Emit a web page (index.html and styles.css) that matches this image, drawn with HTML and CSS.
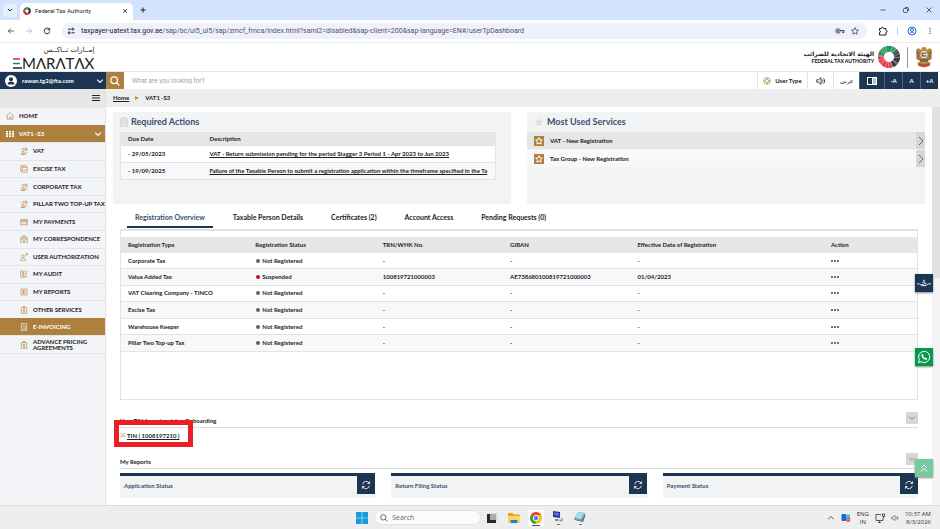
FILE: index.html
```html
<!DOCTYPE html>
<html lang="en">
<head>
<meta charset="utf-8">
<title>Federal Tax Authority</title>
<link rel="stylesheet" href="styles.css">
</head>
<body>
<svg class="defs" aria-hidden="true">
  <symbol id="down" viewBox="0 0 10 10"><path d="M1.500 3.200 5 6.700 8.500 3.200"/></symbol>
  <symbol id="right" viewBox="0 0 10 10"><path d="M3 1 7 5 3 9"/></symbol>
  <symbol id="refresh" viewBox="0 0 12 12"><path d="M2 5a4.200 4.200 0 0 1 7.800-1.200M10 7a4.200 4.200 0 0 1-7.800 1.200M10.300 1.500v2.800H7.600M1.700 10.500V7.700h2.700"/></symbol>
  <symbol id="coins" viewBox="0 0 12 12"><path d="M3 11V6.500h3V11zM4.500 5V2.500h2M6.500 9.500h2c2 0 2.500-1 2.500-2M9 5.500a2 2 0 1 0 0-4 2 2 0 0 0 0 4zM9 2.500v2M1 11h7M1.500 4l1.500-1.500"/></symbol>
  <symbol id="copy" viewBox="0 0 12 12"><path d="M3 9H1V1h8v2M3.500 3.500H11V11H3.500zM5.500 7.500l1.500 1.500 2.500-3M3 3h3"/></symbol>
  <symbol id="card" viewBox="0 0 12 12"><path d="M1 2.500h10v7.500H1zM1 5h10M3 7.500h2M7 7.500l1 1 2-2.500M1 3.500h10"/></symbol>
  <symbol id="mail" viewBox="0 0 12 12"><path d="M1 4.500h10V11H1zM3 4.500v-2h6v2M1 5l5 3 5-3M4 9.500h4M5 1h2"/></symbol>
  <symbol id="user" viewBox="0 0 12 12"><path d="M4.500 7a2 2 0 1 0 0-4 2 2 0 0 0 0 4zM1 11.500C1 9 2.500 7.500 4.500 7.500S8 9 8 11.500zM7.500 4.500 11 1M8.500 1H11v2.500"/></symbol>
  <symbol id="audit" viewBox="0 0 12 12"><path d="M8 1.500H1V11h8V6M3 4h3M3 6h2M3 8.500h4M6.500 4.500 8 6l3.500-5M5 3v6"/></symbol>
  <symbol id="report" viewBox="0 0 12 12"><path d="M1.500 1.500h9v9h-9zM3.500 4h5M3.500 6h5M3.500 8h5M5 3v6"/></symbol>
  <symbol id="clip" viewBox="0 0 12 12"><path d="M2 2.500h8V11.500H2zM4 2.500V1h4v1.500M6 4v6M7.500 5.500c-1-1-3-.5-3 .5s3 1 3 2-2 1.500-3 .5"/></symbol>
  <symbol id="invoice" viewBox="0 0 12 12"><path d="M2 1h8v10.500H2zM4 3.500h1.500M4 6h2l2-2.500M8 6v3H4"/></symbol>
  <symbol id="star" viewBox="0 0 12 12"><path d="M6 1l1.500 3.300 3.600.4-2.700 2.400.8 3.600L6 8.900l-3.200 1.800.8-3.600L.9 4.700l3.600-.4z"/></symbol>
  <symbol id="sound" viewBox="0 0 12 12"><path d="M1 4.500h2L6 2v8L3 7.500H1zM7.500 4.200c1 1 1 2.600 0 3.600M9 2.800c1.800 1.800 1.800 4.600 0 6.400"/></symbol>
  <symbol id="mag" viewBox="0 0 12 12"><path d="M5 9a4 4 0 1 0 0-8 4 4 0 0 0 0 8zM8 8l3.200 3.200"/></symbol>
</svg>

<header class="browser">
  <div class="tabs">
    <button class="tab-list" aria-label="Search tabs"><svg class="i6 bold"><use href="#down"/></svg></button>
    <div class="tab">
      <svg class="fav" viewBox="0 0 10 10"><g fill="none" stroke-width="2.800"><path stroke="#189b58" d="M1.700 4A3.500 3.500 0 0 1 6.500 1.800"/><path stroke="#303234" d="M6.500 1.800A3.500 3.500 0 0 1 7 7.900"/><path stroke="#e32940" d="M7 7.900A3.500 3.500 0 0 1 1.700 4"/></g></svg>
      <span>Federal Tax Authority</span>
      <button class="close" aria-label="Close tab"><svg viewBox="0 0 8 8" class="i6"><path d="M1.500 1.500l5 5M6.500 1.500l-5 5"/></svg></button>
    </div>
    <button aria-label="New tab"><svg viewBox="0 0 8 8" class="i8"><path d="M4 1.500v5M1.500 4h5"/></svg></button>
    <div class="win">
      <button aria-label="Minimize"><svg viewBox="0 0 8 8" class="i8 thin"><path d="M1.500 4h5"/></svg></button>
      <button aria-label="Restore"><svg viewBox="0 0 8 8" class="i8 thin"><rect x="1.500" y="2.500" width="4" height="4" rx="1"/><path d="M3 1.500h2.500a1 1 0 0 1 1 1V5"/></svg></button>
      <button aria-label="Close"><svg viewBox="0 0 8 8" class="i8 thin"><path d="M1.500 1.500l5 5M6.500 1.500l-5 5"/></svg></button>
    </div>
  </div>
  <div class="toolbar">
    <button aria-label="Back"><svg viewBox="0 0 8 8" class="i8 thin"><path d="M7 4H1.300M3.800 1.500 1.300 4l2.500 2.500"/></svg></button>
    <button aria-label="Forward" class="dim"><svg viewBox="0 0 8 8" class="i8 thin"><path d="M1 4h5.700M4.200 1.500 6.700 4 4.200 6.500"/></svg></button>
    <button aria-label="Reload"><svg viewBox="0 0 8 8" class="i8"><path d="M6.500 2.600A2.800 2.800 0 1 0 6.800 4.500M6.700 1v2H4.700"/></svg></button>
    <div class="address">
      <svg viewBox="0 0 8 8" class="i8"><path d="M1 2.200h3M4.500 5.800h3"/><circle cx="5.800" cy="2.200" r="1"/><circle cx="2.200" cy="5.800" r="1"/></svg>
      <span class="url"><b>taxpayer-uatext.tax.gov.ae</b>/sap/bc/ui5_ui5/sap/zmcf_fmca/index.html?saml2=disabled&amp;sap-client=200&amp;sap-language=EN#/userTpDashboard</span>
      <svg viewBox="0 0 10 8" class="key"><circle cx="3" cy="4" r="2.200"/><circle cx="3" cy="4" r=".6"/><path d="M5.200 3.500H9v2H7.500v-1"/></svg>
      <svg class="i8"><use href="#star"/></svg>
    </div>
    <svg viewBox="0 0 10 10" class="i10"><path d="M1.500 2.500h2c0-1.800 2-1.800 2 0h2.500v2.200c1.500 0 1.500 1.800 0 1.800v2.500H1.500V6.500c1.500 0 1.500-1.800 0-1.800z"/></svg>
    <i class="sep"></i>
    <svg viewBox="0 0 10 10" class="i10 blue"><circle cx="5" cy="5" r="4"/><circle cx="5" cy="4" r="1.500"/><path d="M2.200 7.800c1.500-2 4.100-2 5.600 0"/></svg>
    <svg viewBox="0 0 10 10" class="i10 solid"><circle cx="5" cy="2.500" r=".7"/><circle cx="5" cy="5" r=".7"/><circle cx="5" cy="7.500" r=".7"/></svg>
  </div>
</header>

<div class="brand">
  <div class="emara">
    <span class="ar" lang="ar" dir="rtl">إمــارات تــاكــس</span>
    <span class="word"><svg viewBox="0 0 9 11"><path stroke="#e02638" d="M0 1h7"/><path stroke="#179251" d="M0 5.500h7"/><path stroke="#222" d="M0 10h9"/></svg>MΛRΛTΛX</span>
  </div>
  <div class="fta">
    <div class="fta-name"><span lang="ar" dir="rtl">الهيئة الاتحادية للضرائب</span><span>FEDERAL TAX AUTHORITY</span></div>
    <svg class="wheel" viewBox="0 0 22 22"><g fill="none" stroke-width="6"><path stroke="#25985b" d="M3.100 9.600A8 8 0 0 1 17 5.600"/><path stroke="#3b3d40" d="M17 5.600A8 8 0 0 1 13.700 18.500"/><path stroke="#e13849" d="M13.700 18.500A8 8 0 0 1 3.100 9.600"/></g><g fill="none" stroke="#fff" stroke-width=".5" opacity=".8"><path d="M7 9 2 3M9 7 7 0M12 7l3-7M15 9l6-5M15 12l7-1M14 14l7 4M12 15l3 7M9 15l-2 7M7 13l-6 5M6 11 0 10M8 8 4 1M13 7l6-5M15 11l7-4M15 14l5 6M10 15l1 7M7 14l-4 6M6 12l-6 2"/></g></svg>
    <i class="rule"></i>
    <svg class="falcon" viewBox="0 0 18 22"><path fill="#b28a45" d="M9 1c2 0 3 1 2.500 3L15 2l2 2-.5 9-4 2.500 3 1-1 3.500L9 21.500 3.500 20l-1-3.500 3-1-4-2.500L1 4l2-2 3.500 2C6 2 7 1 9 1z"/><path stroke="#6b552f" stroke-width=".6" d="M2.500 5v8M4 5.500v8M14 5.500v8M15.500 5v8M5.500 6v3M12.500 6v3"/><circle cx="9" cy="8.500" r="3.600" fill="#f4efe2"/><path fill="#d63a3c" d="M6.500 6.500h1.600v4H6.500z"/><path fill="#31854f" d="M8.100 6.500h3.400v1.400H8.100z"/><path fill="#333" d="M8.100 9.400h3.400v1.100H8.100z"/><path fill="#c4413d" d="M3.500 17c3 1.500 8 1.500 11 0v2.500c-3 1.500-8 1.500-11 0z"/><path fill="#6d624f" d="M5 13h8v2.500H5z"/></svg>
  </div>
</div>

<div class="appbar">
  <button class="account"><svg class="avatar" viewBox="0 0 12 12"><circle cx="6" cy="6" r="6" fill="#fff"/><circle cx="6" cy="4.200" r="2" fill="#1c3553"/><path fill="#1c3553" d="M2.500 9.500c0-4 7-4 7 0z"/></svg><span>rawan.tg2@fta.com</span><svg class="i8"><use href="#down"/></svg></button>
  <button class="find" aria-label="Search"><svg class="i10 bold"><use href="#mag"/></svg></button>
  <input type="search" aria-label="Search" placeholder="What are you looking for?">
  <button class="tool usertype"><svg viewBox="0 0 10 10" class="i8 gold"><circle cx="5" cy="5" r="4.200"/><circle cx="5" cy="5" r="2"/><path d="M1 5h2M7 5h2M5 1v2M5 7v2"/></svg>User Type</button>
  <button class="tool t26" aria-label="Sound"><svg class="i10"><use href="#sound"/></svg></button>
  <button class="tool t26 arabic" lang="ar">عربي</button>
  <button class="tool t25 navy" aria-label="Contrast"><svg viewBox="0 0 10 8" class="contrast"><path fill="#fff" d="M0 0h10v8H0z"/><path fill="#1c3553" d="M1 1h4v6H1z"/><path fill="#b9c0c8" d="M6 1h3v6H6z"/></svg></button>
  <button class="tool t18 navy">-A</button>
  <button class="tool t18 navy">A</button>
  <button class="tool t18 navy">+A</button>
</div>

<div class="shell">
  <nav class="side">
    <button class="burger" aria-label="Menu"><svg viewBox="0 0 8 8" class="i8"><path d="M0 1.500h8M0 4h8M0 6.500h8"/></svg></button>
    <ul class="menu">
      <li class="top"><a href="#"><svg viewBox="0 0 12 12" class="i8"><path d="M.5 6 6 1l5.500 5M2 5v6h3V8h2v3h3V5"/></svg>HOME</a></li>
      <li class="top on"><a href="#"><svg viewBox="0 0 8 8" class="i8 grid"><path d="M0 1h2v6H0zM3 1h2v6H3zM6 1h2v6H6z"/><path fill="#ad803e" d="M0 2.600h8v.4H0zM0 4.800h8v.4H0z"/></svg>VAT1 -S3<svg class="i8 end"><use href="#down"/></svg></a></li>
      <li><a href="#"><svg class="i8"><use href="#coins"/></svg>VAT</a></li>
      <li><a href="#"><svg class="i8"><use href="#copy"/></svg>EXCISE TAX</a></li>
      <li><a href="#"><svg class="i8"><use href="#coins"/></svg>CORPORATE TAX</a></li>
      <li><a href="#"><svg class="i8"><use href="#coins"/></svg>PILLAR TWO TOP-UP TAX</a></li>
      <li><a href="#"><svg class="i8"><use href="#card"/></svg>MY PAYMENTS</a></li>
      <li><a href="#"><svg class="i8"><use href="#mail"/></svg>MY CORRESPONDENCE</a></li>
      <li><a href="#"><svg class="i8"><use href="#user"/></svg>USER AUTHORIZATION</a></li>
      <li><a href="#"><svg class="i8"><use href="#audit"/></svg>MY AUDIT</a></li>
      <li><a href="#"><svg class="i8"><use href="#report"/></svg>MY REPORTS</a></li>
      <li><a href="#"><svg class="i8"><use href="#clip"/></svg>OTHER SERVICES</a></li>
      <li class="on"><a href="#"><svg class="i8"><use href="#invoice"/></svg>E-INVOICING</a></li>
      <li><a href="#"><svg class="i8"><use href="#clip"/></svg><span>ADVANCE PRICING<br>AGREEMENTS</span></a></li>
    </ul>
  </nav>

  <div class="page">
    <div class="crumbs"><a href="#">Home</a><svg viewBox="0 0 4 4"><path d="M0 0l4 2-4 2z"/></svg><span>VAT1 -S3</span></div>
    <div class="scroller">
      <main>
        <div class="cards">
          <section class="card required">
            <h2><svg viewBox="0 0 8 10" class="pad"><path d="M0 1h8v9H0zM2 0h4v2H2z"/><path stroke="#f2f3f5" stroke-width=".6" d="M2 4h4M2 6h4M2 8h4"/></svg>Required Actions</h2>
            <table>
              <thead><tr><th>Due Date</th><th>Description</th></tr></thead>
              <tbody>
                <tr><td>- 29/05/2023</td><td><a href="#">VAT - Return submission pending for the period Stagger 3 Period 1 - Apr 2023 to Jun 2023</a></td></tr>
                <tr><td>- 19/09/2025</td><td><a href="#">Failure of the Taxable Person to submit a registration application within the timeframe specified in the Ta</a></td></tr>
              </tbody>
            </table>
          </section>
          <section class="card used">
            <h2><svg class="i10 greystar"><use href="#star"/></svg>Most Used Services</h2>
            <a class="service" href="#"><span class="badge"><svg class="i8 bold"><use href="#star"/></svg></span>VAT - New Registration<span class="go"><svg class="i10"><use href="#right"/></svg></span></a>
            <a class="service" href="#"><span class="badge"><svg class="i8 bold"><use href="#star"/></svg></span>Tax Group - New Registration<span class="go"><svg class="i10"><use href="#right"/></svg></span></a>
          </section>
        </div>

        <div class="tablist" role="tablist">
          <button role="tab" aria-selected="true">Registration Overview</button>
          <button role="tab">Taxable Person Details</button>
          <button role="tab">Certificates (2)</button>
          <button role="tab">Account Access</button>
          <button role="tab">Pending Requests (0)</button>
        </div>
        <div class="panel">
          <table>
            <thead><tr><th>Registration Type</th><th>Registration Status</th><th>TRN/WHK No.</th><th>GIBAN</th><th class="wide">Effective Date of Registration</th><th>Action</th></tr></thead>
            <tbody>
              <tr><td>Corporate Tax</td><td><i class="dot"></i>Not Registered</td><td>-</td><td>-</td><td>-</td><td><button class="more" aria-label="Actions"><i></i><i></i><i></i></button></td></tr>
              <tr><td>Value Added Tax</td><td><i class="dot red"></i>Suspended</td><td>100819721000003</td><td>AE738680100819721000003</td><td>01/04/2023</td><td><button class="more" aria-label="Actions"><i></i><i></i><i></i></button></td></tr>
              <tr><td>VAT Clearing Company - TINCO</td><td><i class="dot"></i>Not Registered</td><td>-</td><td>-</td><td>-</td><td><button class="more" aria-label="Actions"><i></i><i></i><i></i></button></td></tr>
              <tr><td>Excise Tax</td><td><i class="dot"></i>Not Registered</td><td>-</td><td>-</td><td>-</td><td><button class="more" aria-label="Actions"><i></i><i></i><i></i></button></td></tr>
              <tr><td>Warehouse Keeper</td><td><i class="dot"></i>Not Registered</td><td>-</td><td>-</td><td>-</td><td><button class="more" aria-label="Actions"><i></i><i></i><i></i></button></td></tr>
              <tr><td>Pillar Two Top-up Tax</td><td><i class="dot"></i>Not Registered</td><td>-</td><td>-</td><td>-</td><td><button class="more" aria-label="Actions"><i></i><i></i><i></i></button></td></tr>
            </tbody>
          </table>
        </div>

        <section class="fold">
          <h3>Your TIN for e-invoicing Onboarding<button aria-label="Toggle"><svg class="i8"><use href="#down"/></svg></button></h3>
          <div class="tin"><a href="#"><svg viewBox="0 0 8 8" class="i6"><path d="M1 1l2 2M7 1 5 3M2 5l2-2 2 2M1 7l1-2M7 7 6 5M4 5v2"/></svg>TIN ( 1008197210 )</a><span class="mark"></span></div>
        </section>
        <section class="fold">
          <h3>My Reports<button aria-label="Toggle"><svg class="i8"><use href="#down"/></svg></button></h3>
          <div class="reports">
            <div class="report">Application Status<button aria-label="Refresh"><svg class="i10"><use href="#refresh"/></svg></button></div>
            <div class="report">Return Filing Status<button aria-label="Refresh"><svg class="i10"><use href="#refresh"/></svg></button></div>
            <div class="report">Payment Status<button aria-label="Refresh"><svg class="i10"><use href="#refresh"/></svg></button></div>
          </div>
        </section>
      </main>
      <div class="track"><div class="thumb"></div></div>
      <button class="float sign" aria-label="Accessibility"><svg viewBox="0 0 16 10"><path d="M0 6h3l1 1h3l1-1h3l1 1 1-1h3M6 5c1-2 3-2 3 0M7 2h2M5 8h6"/></svg></button>
      <button class="float chat" aria-label="WhatsApp"><svg viewBox="0 0 14 14"><path d="M1.500 12.500l.8-2.800A5.600 5.600 0 1 1 4.400 11.800z"/><path class="fill" d="M4.500 4.500l1-.8 1.200 1.800-.6.800c.4.900 1 1.400 1.800 1.800l.8-.7 1.600 1.200-.7 1.100c-2.600.5-5.400-2.400-5.100-5.200z"/></svg></button>
      <button class="float totop" aria-label="Back to top"><svg viewBox="0 0 10 10"><path d="M2 5l3-3 3 3M2 8.500l3-3 3 3"/></svg></button>
    </div>
  </div>
</div>

<footer class="taskbar">
  <div class="dock">
    <svg class="ic12" viewBox="0 0 12 12"><path fill="#169be0" d="M0 0h5.700v5.700H0zM6.300 0H12v5.700H6.300zM0 6.300h5.700V12H0zM6.300 6.300H12V12H6.300z"/></svg>
    <label class="seek"><svg class="i8"><use href="#mag"/></svg><input type="text" aria-label="Search" placeholder="Search"></label>
    <svg class="ic12" viewBox="0 0 12 12"><path fill="#ddd" d="M4 1h8v8H4z"/><path fill="#292929" d="M1 2h3v6h6v3H1z"/><path fill="#aaa" d="M4 2h6v6H4z"/></svg>
    <svg class="ic12" viewBox="0 0 12 12"><path fill="#e9a820" d="M0 1h4.500L6 2.500h6V11H0z"/><path fill="#ffd65a" d="M0 4h12v7H0z"/><path fill="#1583d8" d="M2.500 8h7v3h-7z"/></svg>
    <span class="app current"><svg class="ic12" viewBox="0 0 12 12"><circle cx="6" cy="6" r="6" fill="#fbbc04"/><path fill="#ea4335" d="M.8 3A6 6 0 0 1 11.200 3H6L3.500 7.500z"/><path fill="#34a853" d="M.8 3l2.700 4.500L6 9l-.8 3A6 6 0 0 1 .8 3z"/><circle cx="6" cy="6" r="2.900" fill="#fff"/><circle cx="6" cy="6" r="2.200" fill="#4285f4"/></svg></span>
    <span class="app"><svg class="ic12" viewBox="0 0 12 12"><path fill="#1735a8" d="M1 0l7 1v6L1 6z"/><path fill="#5571d6" d="M2 1.200l5 .7v3L2 4z"/><path fill="#888" d="M3 8h6v2H3z"/><circle cx="9" cy="9" r="2.700" fill="#d8ddd8"/><path stroke="#3a9655" fill="none" d="M7.800 9l1 1 1.500-2"/></svg></span>
    <span class="app"><svg class="ic12" viewBox="0 0 12 12"><path fill="#52a8b8" d="M4 1l7 1-3 8-8-2z"/><path fill="#a8dce5" d="M4 1l6 1-3 6-6-1z"/><path fill="#456" d="M0 8l8 2 3-7 .5 1L9 11 1 9z"/></svg></span>
  </div>
  <div class="tray">
    <svg class="i8" viewBox="0 0 10 10"><path d="M1.500 6.500 5 3l3.500 3.500"/></svg>
    <svg class="ic10" viewBox="0 0 10 10"><rect width="4.500" height="7" x=".5" y="1" rx="1" fill="#1769c5"/><path fill="#43c3ec" d="M5 1.500h4V5H5z"/><circle cx="7.200" cy="6.800" r="2.200" fill="#d9434b"/><path stroke="#fff" stroke-width=".7" d="M6 6.800h2.400"/></svg>
    <span>ENG<br>IN</span>
    <svg class="ic10 stroke" viewBox="0 0 10 10"><path d="M6 1.500H1v6h7V5M3 9.500h3M4.500 7.500v2M7.500 1h2v2.500h-2zM8.500 3.500V5"/></svg>
    <svg class="i8 dimmed"><use href="#sound"/></svg>
    <span class="clock">10:37 AM<br>8/3/2026</span>
  </div>
</footer>
</body>
</html>
```
FILE: styles.css
```css
:root {
  --navy: #1c3553;
  --gold: #ad803e;
  --ui: Lato, "Liberation Sans", sans-serif;
  --os: "Open Sans", "Noto Sans", sans-serif;
}
* { box-sizing: border-box; }
body {
  margin: 0;
  height: 100vh;
  display: flex;
  flex-direction: column;
  overflow: hidden;
  background: #fff;
  color: #222;
  font: 700 6px/8px var(--ui);
}
button, input { font: inherit; color: inherit; border: 0; padding: 0; margin: 0; background: none; outline: 0; }
button { display: flex; align-items: center; justify-content: center; }
a { color: inherit; }
h2, h3, ul { margin: 0; padding: 0; }
table { border-collapse: collapse; width: 100%; table-layout: fixed; }
th, td { text-align: left; font-weight: 700; padding: 0 0 0 7px; white-space: nowrap; overflow: hidden; }
svg { flex: none; fill: none; stroke: currentColor; stroke-width: 1; display: block; }
.defs { position: absolute; width: 0; height: 0; }
.i6 { width: 6px; height: 6px; }
.i8 { width: 8px; height: 8px; }
.i10 { width: 10px; height: 10px; }
.ic12 { width: 12px; height: 12px; stroke: none; }
.ic10 { width: 10px; height: 10px; stroke: none; }
.ic10.stroke { stroke: #333; stroke-width: 0.8; }
.thin { stroke-width: 0.7; }
.bold { stroke-width: 1.5; }

/* browser window */
.browser { font: 400 6px/10px Roboto, sans-serif; flex: none; }
.tabs { display: flex; align-items: center; height: 20px; background: #d3e2fd; padding-left: 3px; }
.tab-list { width: 14px; height: 13px; border-radius: 4px; background: #e6effe; margin-right: 3px; }
.tab { display: flex; align-items: center; align-self: flex-end; width: 113px; height: 17px; padding: 0 5px 1px 3px; gap: 4px; background: #fff; border-radius: 5px 5px 0 0; margin-right: 6px; }
.fav { width: 8px; height: 8px; }
.close { margin-left: auto; }
.win { margin-left: auto; display: flex; gap: 15px; padding-right: 7px; }
.toolbar { display: flex; align-items: center; height: 23px; padding: 0 6px 0 7px; gap: 10px; border-bottom: 1px solid #ececec; }
.dim { color: #aaa; }
.address { flex: 1; display: flex; align-items: center; height: 16px; gap: 6px; padding: 0 8px 0 5px; margin: 0 2px 0 1px; border-radius: 8px; background: #ecf1fb; min-width: 0; }
.url { flex: 1; font-size: 7px; color: #555; white-space: nowrap; overflow: hidden; }
.url b { font-weight: 400; color: #222; }
.key { width: 10px; height: 8px; stroke-width: 0.8; }
.sep { width: 1px; height: 8px; background: #bcd2f7; }
.toolbar > .i10 { margin: 0 -1px; }
.blue { color: #2c6ad0; }
.solid { fill: #444; stroke: none; }

/* brand row */
.brand { display: flex; justify-content: space-between; align-items: center; flex: none; height: 28px; padding: 0 7px 0 13px; }
.emara { display: flex; flex-direction: column; color: #222; }
.emara .ar { font: 400 7px/12px "DejaVu Sans", sans-serif; text-align: right; direction: ltr; }
.word { display: flex; align-items: center; font: 400 15px/14px Lato, sans-serif; }
.word svg { width: 9px; height: 11px; stroke-width: 1.5; }
.fta { display: flex; align-items: center; gap: 4px; }
.fta-name { display: flex; flex-direction: column; font: 900 5px/7px var(--ui); text-align: right; }
.fta-name [lang] { font: 700 6px/8px "DejaVu Sans", sans-serif; }
.wheel { width: 22px; height: 22px; }
.rule { width: 1px; height: 21px; background: #999; margin: 0 3px; }
.falcon { width: 18px; height: 22px; stroke: none; }

/* application bar */
.appbar { display: flex; flex: none; height: 18px; padding-right: 2px; border-top: 1px solid #e8e8e8; }
.account { width: 106px; background: var(--navy); color: #fff; padding: 0 2px 0 5px; gap: 5px; }
.account .i8 { margin-left: auto; stroke-width: 1.5; }
.avatar { width: 12px; height: 12px; stroke: none; }
.find { width: 18px; background: var(--gold); color: #fff; }
.appbar input { flex: 1; min-width: 0; padding-left: 8px; font: 400 6px/8px Inter, sans-serif; }
.appbar input::placeholder { color: #999; opacity: 1; }
.tool { border-left: 1px solid #e3e3e3; }
.usertype { width: 50px; gap: 4px; }
.gold { color: #bd955d; }
.t26 { width: 26px; }
.t25 { width: 25px; }
.t18 { width: 18px; }
.arabic { font-weight: 400; }
.navy { background: var(--navy); color: #fff; border-color: #4b607a; }
.contrast { width: 10px; height: 8px; stroke: none; }

/* side navigation */
.shell { flex: 1; display: flex; min-height: 0; }
.side { width: 106px; flex: none; background: #f2f4f7; border-right: 1px solid #e4e4e4; }
.burger { width: 100%; height: 18px; background: #e6e6e6; justify-content: flex-end; padding-right: 5px; }
.menu { list-style: none; display: grid; grid-template-columns: minmax(0, 1fr); grid-auto-rows: 1fr; min-height: 247px; border-bottom: 1px solid #e3e5e8; }
.menu a { display: flex; align-items: center; height: 100%; padding-left: 20px; gap: 5px; text-decoration: none; line-height: 6px; white-space: nowrap; border-top: 1px solid #e3e5e8; }
.menu svg { color: #b58c50; }
.menu .top a { padding-left: 6px; }
.menu .on a { background: var(--gold); color: #fff; border-color: var(--gold); }
.menu .on svg { color: #fff; }
.menu .grid { fill: #fff; stroke: none; }
.menu .end { margin: 0 3px 0 auto; stroke-width: 1.5; }

/* page */
.page { flex: 1; min-width: 0; display: flex; flex-direction: column; }
.crumbs { display: flex; align-items: center; gap: 6px; flex: none; height: 18px; padding-left: 7px; background: #eee; }
.crumbs svg { width: 4px; height: 4px; fill: #c08a38; stroke: none; }
.scroller { position: relative; flex: 1; display: flex; min-height: 0; }
main { flex: 1; min-width: 0; padding: 5px 7px 0; overflow: hidden; }
.track { width: 8px; background: #f5f5f5; }
.thumb { height: 43%; background: #e2e2e2; }
.cards { display: grid; grid-template-columns: 1fr 1fr; gap: 16px; }
.card { height: 92px; background: #f2f3f5; min-width: 0; }
.card h2 { display: flex; align-items: center; gap: 3px; height: 20px; padding-left: 7px; font: 700 9px/10px var(--ui); color: #36506e; }
.pad { width: 8px; height: 10px; fill: #dcdddf; stroke: none; }
.greystar { fill: #dcdddf; stroke: none; }
.required { padding-right: 15px; }
.required h2 + table { margin-left: 7px; width: calc(100% - 7px); background: #fff; border: 1px solid #e3e3e3; }
.required th:first-child { width: 82px; }
.required th { height: 13px; background: #e6e6e6; }
.required td { height: 17px; border-top: 1px solid #e1e4e7; }
tbody tr:nth-child(even) { background: #f7f8fa; }
.service { display: flex; align-items: center; height: 17px; margin-bottom: 1px; padding-left: 7px; gap: 6px; text-decoration: none; background: #e6e6e6; }
.service + .service { background: #f7f8fa; }
.badge { padding: 1px; background: var(--gold); color: #fff; }
.go { display: flex; align-items: center; align-self: stretch; width: 9px; margin-left: auto; background: #d6d6d6; color: #666; }

.tablist { display: flex; gap: 12px; height: 25px; padding-left: 14px; }
.tablist button { height: 24px; padding: 4px 8px 0; border-bottom: 2px solid transparent; white-space: nowrap; font-size: 7px; }
.tablist [aria-selected] { color: #36506e; border-color: var(--navy); }
.panel { margin: 0 7px; height: 171px; padding-top: 6px; border: 1px solid #e2e2e2; border-top-width: 2px; }
.panel table { height: 115px; }
.panel th { width: 16%; height: 16px; background: #e6e6e6; }
.panel th.wide { width: auto; }
.panel th:last-child { width: 93px; }
.panel td { border-bottom: 1px solid #e2e4e6; }
.dot { display: inline-block; width: 4px; height: 4px; margin: 0 2px 0 1px; border-radius: 50%; background: #566472; }
.red { background: #c8101c; }
.more { gap: 1px; }
.more i { width: 2px; height: 2px; border-radius: 50%; background: #444; }

.fold { margin: 0 7px; }
.fold h3 { display: flex; align-items: center; justify-content: space-between; height: 17px; padding-top: 4px; margin-top: 11px; font: inherit; border-bottom: 1px solid #dedede; }
.fold h3 button { width: 12px; height: 12px; background: #d6d6d6; color: #777; margin-top: -6px; }
.tin { position: relative; height: 13px; padding-top: 4px; }
.tin a { display: inline-flex; gap: 1px; }
.tin svg { color: #c08a38; }
.mark { position: absolute; left: -6px; top: -8px; width: 79px; height: 27px; border: 5px solid #ee1c25; }
.reports { display: grid; grid-template-columns: repeat(3, 1fr); gap: 16px; padding-top: 4px; }
.report { display: flex; align-items: center; justify-content: space-between; height: 25px; padding: 0 0 2px 4px; background: #f2f3f5; border-top: 3px solid var(--navy); color: #36506e; }
.report button { width: 18px; height: 18px; align-self: flex-start; background: var(--navy); color: #fff; }

.float { position: absolute; right: 7px; width: 18px; height: 18px; color: #fff; box-shadow: 0 1px 2px #888; }
.float svg { width: 14px; height: 14px; }
.sign { top: 167px; background: var(--navy); }
.chat { top: 241px; background: #06994b; }
.chat .fill { fill: #fff; stroke: none; }
.totop { top: 352px; background: #79c99f; }
.totop svg { width: 10px; height: 10px; }

/* desktop taskbar */
.taskbar { display: flex; align-items: center; justify-content: flex-end; flex: none; height: 24px; border-top: 1px solid #dcdcdc; background: #eee; font: 400 6px/8px var(--os); }
.dock { flex: 1; display: flex; align-items: center; gap: 10px; padding-left: calc(38% - 1px); }
.seek { display: flex; align-items: center; gap: 4px; width: 107px; height: 15px; margin: 0 -5px 0 -4px; padding-left: 5px; border: 1px solid #e2e2e2; border-radius: 8px; background: #fbfbfb; font-size: 7px; }
.seek input { width: 80px; }
.seek input::placeholder { color: #666; opacity: 1; }
.app { display: flex; flex-direction: column; align-items: center; gap: 1px; }
.app::after { content: ""; width: 3px; height: 1px; background: #777; }
.current { background: #fafafa; padding: 2px 2px 0; margin: 0 -2px; }
.current::after { width: 8px; background: #456; }
.tray { display: flex; align-items: center; gap: 6px; padding-right: 9px; text-align: center; color: #333; }
.tray .clock { text-align: right; }
.dimmed { color: #666; }
```
